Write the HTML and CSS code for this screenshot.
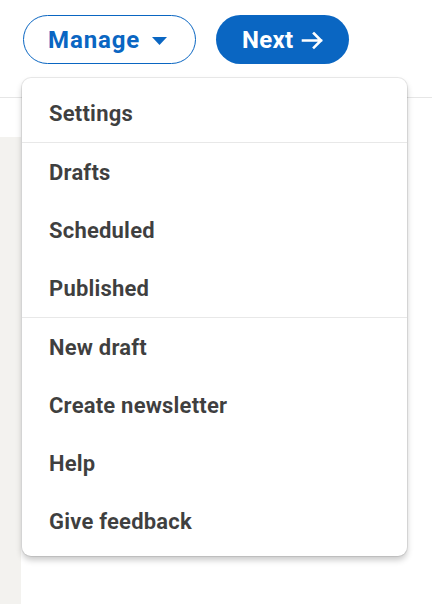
FILE: index.html
```html
<!DOCTYPE html>
<html>
<head>
<meta charset="utf-8">
<link rel="stylesheet" href="styles.css">
</head>
<body>
<div class="page">
  <header class="topbar">
    <div class="actions">
      <button class="btn btn-outline">Manage
        <svg class="caret" width="15" height="8" viewBox="0 0 15 8"><path d="M0 0h15L7.5 8z" fill="#0a66c2"/></svg>
      </button>
      <button class="btn btn-primary">Next
        <svg class="arrow" width="23" height="19" viewBox="0 0 23 19"><path d="M2 9.5h18M13 2.5l7 7-7 7" fill="none" stroke="#fff" stroke-width="2.6" stroke-linecap="square" stroke-linejoin="miter"/></svg>
      </button>
    </div>
    <div class="menu">
      <div class="menu-section">
        <div class="menu-item">Settings</div>
      </div>
      <div class="menu-section">
        <div class="menu-item">Drafts</div>
        <div class="menu-item">Scheduled</div>
        <div class="menu-item">Published</div>
      </div>
      <div class="menu-section">
        <div class="menu-item">New draft</div>
        <div class="menu-item">Create newsletter</div>
        <div class="menu-item">Help</div>
        <div class="menu-item">Give feedback</div>
      </div>
    </div>
  </header>
  <div class="spacer"></div>
  <main class="main">
    <div class="rail"></div>
    <div class="content"></div>
  </main>
</div>
</body>
</html>
```
FILE: styles.css
```css
html, body {
  margin: 0;
  padding: 0;
  background: #fff;
  font-family: Roboto, "Liberation Sans", sans-serif;
}
.page {
  width: 432px;
  height: 604px;
  overflow: hidden;
  display: flex;
  flex-direction: column;
}
.topbar {
  position: relative;
  height: 97px;
  border-bottom: 1px solid #e6e6e6;
  box-sizing: content-box;
}
.actions {
  display: flex;
  gap: 20px;
  padding: 15px 0 0 23px;
}
.btn {
  height: 49px;
  border-radius: 25px;
  font-family: Roboto, "Liberation Sans", sans-serif;
  font-size: 24px;
  font-weight: 700;
  display: flex;
  align-items: center;
  box-sizing: border-box;
  cursor: pointer;
  letter-spacing: 0.3px;
}
.btn-outline {
  width: 173px;
  background: #fff;
  color: #0a66c2;
  border: 1.5px solid #0a66c2;
  padding: 0 0 0 24px;
  gap: 12px;
  letter-spacing: 0.9px;
}
.btn-primary {
  width: 133px;
  background: #0a66c2;
  color: #fff;
  border: none;
  padding: 0 0 0 26px;
  gap: 8px;
}
.caret { margin-top: 2px; }
.arrow { margin-top: 1px; }
.menu {
  position: absolute;
  left: 22px;
  top: 78px;
  width: 385px;
  background: #fff;
  border-radius: 9px;
  box-shadow: 0 0 0 1px rgba(0,0,0,0.08), 0 4px 6px rgba(0,0,0,0.22);
  padding: 6px 0;
  z-index: 10;
}
.menu-section + .menu-section {
  border-top: 1px solid #e8e8e8;
}
.menu-item {
  height: 58px;
  display: flex;
  align-items: center;
  padding-left: 27px;
  font-size: 22px;
  font-weight: 700;
  letter-spacing: 0.2px;
  color: rgba(0,0,0,0.75);
}
.spacer { height: 39px; }
.main {
  flex: 1;
  display: grid;
  grid-template-columns: 21px 1fr;
}
.rail {
  background: #f3f2ef;
}
.content { background: #fff; }
```
